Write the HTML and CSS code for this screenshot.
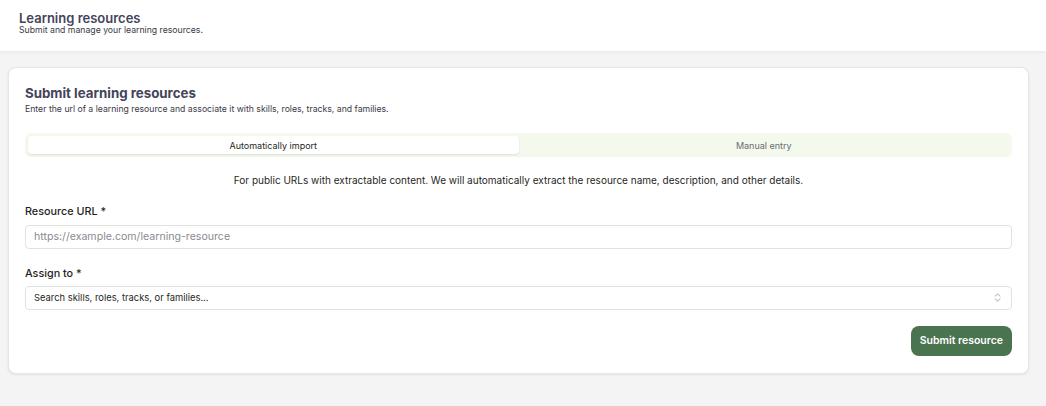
FILE: index.html
```html
<!DOCTYPE html>
<html lang="en">
<head>
    <meta charset="UTF-8">
    <meta name="viewport" content="width=device-width, initial-scale=1.0">
    <title>Learning resources</title>
    <link rel="stylesheet" href="styles.css">
</head>
<body>
    <header class="page-header">
        <h1>Learning resources</h1>
        <p>Submit and manage your learning resources.</p>
    </header>

    <main class="page-main">
        <section class="card">
            <h2>Submit learning resources</h2>
            <p class="card-sub">Enter the url of a learning resource and associate it with skills, roles, tracks, and families.</p>

            <div class="tabs">
                <button class="tab active">Automatically import</button>
                <button class="tab">Manual entry</button>
            </div>

            <p class="tab-note">For public URLs with extractable content. We will automatically extract the resource name, description, and other details.</p>

            <div class="field">
                <label for="url">Resource URL *</label>
                <input id="url" class="input" type="text" placeholder="https://example.com/learning-resource">
            </div>

            <div class="field">
                <label>Assign to *</label>
                <div class="select">
                    <span>Search skills, roles, tracks, or families...</span>
                    <svg width="11" height="11" viewBox="0 0 24 24" fill="none" stroke="#9a9aa2" stroke-width="2" stroke-linecap="round" stroke-linejoin="round"><path d="m7 15 5 5 5-5"/><path d="m7 9 5-5 5 5"/></svg>
                </div>
            </div>

            <div class="actions">
                <button class="submit">Submit resource</button>
            </div>
        </section>
    </main>
</body>
</html>
```

FILE: styles.css
```css
body {
    font-family: Inter, 'Noto Sans', sans-serif;
    margin: 0;
    background-color: #f4f4f4;
    color: #1f1f24;
    height: 406px;
}
.page-header {
    background: #fff;
    padding: 10px 19px 16px;
    height: 25px;
    box-shadow: 0 1px 4px rgba(0,0,0,0.06);
}
.page-header h1 {
    margin: 0;
    font-size: 13px;
    line-height: 16px;
    font-weight: 600;
    color: #44445a;
}
.page-header p {
    margin: 0;
    font-size: 8.7px;
    line-height: 9px;
    color: #3a3a46;
}
.page-main {
    padding: 16px 17px 0 8px;
}
.card {
    background: #fff;
    border: 1px solid #e6e6e6;
    border-radius: 8px;
    box-shadow: 0 1px 3px rgba(0,0,0,0.08);
    padding: 16px 16px 17px;
}
.card h2 {
    margin: 0;
    font-size: 13.3px;
    line-height: 18px;
    font-weight: 700;
    color: #44445a;
}
.card-sub {
    margin: 1px 0 0;
    font-size: 8.7px;
    line-height: 12px;
    color: #3a3a46;
}
.tabs {
    display: flex;
    margin-top: 18px;
    padding: 3px;
    background: #f3f9ec;
    border-radius: 6px;
    height: 18px;
}
.tab {
    flex: 1;
    border: 0;
    background: transparent;
    font-family: inherit;
    font-size: 9px;
    color: #6b6b70;
    border-radius: 4px;
    padding: 0;
    cursor: pointer;
}
.tab.active {
    background: #fff;
    color: #1f1f24;
    box-shadow: 0 1px 2px rgba(0,0,0,0.1);
}
.tab-note {
    margin: 16px 0 0;
    text-align: center;
    font-size: 10px;
    line-height: 14px;
    color: #1f1f24;
}
.field {
    margin-top: 18px;
}
.field label {
    display: block;
    font-size: 10.8px;
    line-height: 14px;
    font-weight: 500;
    margin-bottom: 5px;
}
.input,
.select {
    box-sizing: border-box;
    width: 100%;
    height: 24px;
    border: 1px solid #e2e2e2;
    border-radius: 4px;
    padding: 0 8px;
    font-family: inherit;
    font-size: 10.6px;
    background: #fff;
}
.input::placeholder {
    color: #8a8a90;
}
.select {
    display: flex;
    align-items: center;
    justify-content: space-between;
    font-size: 9.4px;
    color: #1f1f24;
}
.actions {
    display: flex;
    justify-content: flex-end;
    margin-top: 16px;
}
.submit {
    background: #4a7350;
    color: #fff;
    border: 0;
    border-radius: 8px;
    height: 30px;
    padding: 0 9px;
    font-family: inherit;
    font-size: 10.5px;
    font-weight: 600;
    cursor: pointer;
}
```
